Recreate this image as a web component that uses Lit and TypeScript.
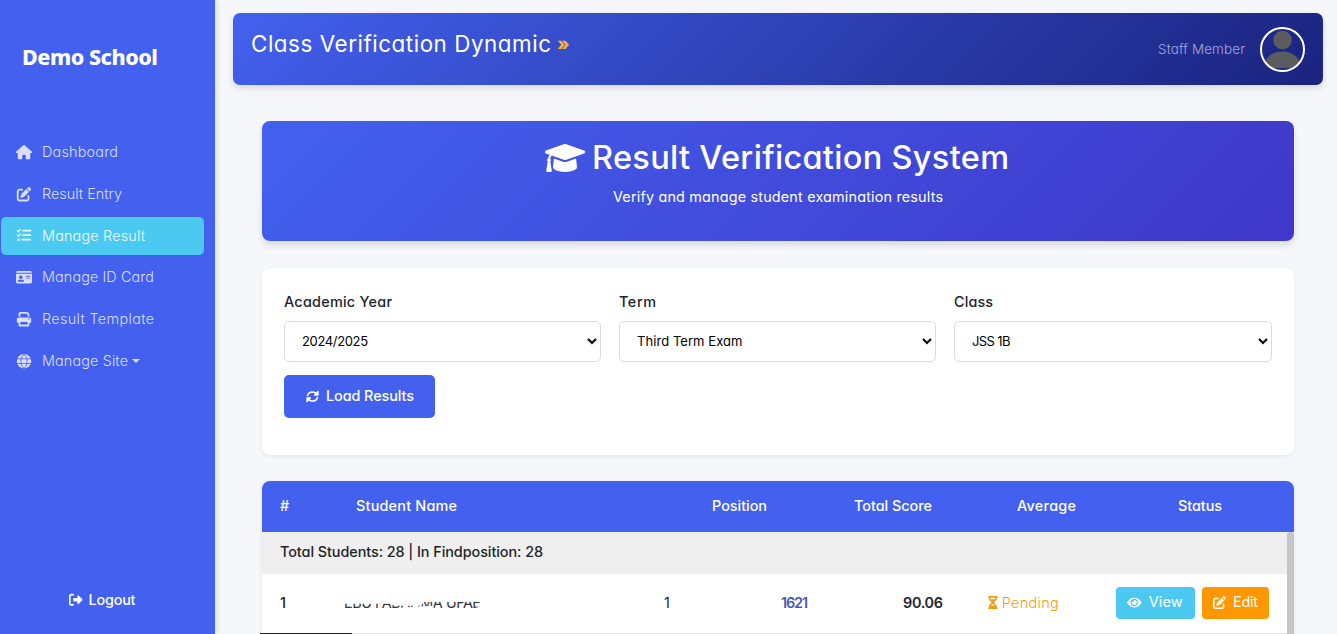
import { LitElement, html, css, svg } from "lit";
import { customElement, property, state } from "lit/decorators.js";
import { styleMap } from "lit/directives/style-map.js";

/** A single line of text tracked so that it spans the given width. */
@customElement("fit-label")
class FitLabel extends LitElement {
  static styles = css`
    :host { display: inline-block; white-space: pre; flex: none; }
    .line { display: inline-block; }
  `;
  @property() text = "";
  @property({ type: Number }) width = 0;
  @state() private tracking = 0;

  firstUpdated() {
    const line = this.renderRoot.querySelector(".line") as HTMLElement;
    const natural = line.getBoundingClientRect().width;
    this.tracking = (this.width - natural) / Math.max(1, this.text.length - 1);
  }

  render() {
    return html`<span class="line" style=${styleMap({
      letterSpacing: `${this.tracking}px`,
      marginRight: `${-this.tracking}px`,
    })}>${this.text}</span>`;
  }
}

const EDIT = svg`<path d="M471.6 21.7c-21.9-21.9-57.3-21.9-79.2 0L362.3 51.7l97.9 97.9 30.1-30.1c21.9-21.9 21.9-57.3 0-79.2L471.6 21.7zm-299.2 220c-6.1 6.1-10.8 13.6-13.5 21.9l-29.6 88.8c-2.9 8.6-.6 18.1 5.8 24.6s15.9 8.7 24.6 5.8l88.8-29.6c8.2-2.7 15.7-7.4 21.9-13.5L437.7 172.3 339.7 74.3 172.4 241.7zM96 64C43 64 0 107 0 160V416c0 53 43 96 96 96H352c53 0 96-43 96-96V320c0-17.7-14.3-32-32-32s-32 14.3-32 32v96c0 17.7-14.3 32-32 32H96c-17.7 0-32-14.3-32-32V160c0-17.7 14.3-32 32-32h96c17.7 0 32-14.3 32-32s-14.3-32-32-32H96z"/>`;

const ICONS: Record<string, { w: number; body: unknown }> = {
  home: { w: 576, body: svg`<path d="M575.8 255.5c0 18-15 32.1-32 32.1h-32l.7 160.2c0 2.7-.2 5.4-.5 8.1V472c0 22.1-17.9 40-40 40H456 392c-22.1 0-40-17.9-40-40V384c0-17.7-14.3-32-32-32H256c-17.7 0-32 14.3-32 32v88c0 22.1-17.9 40-40 40H104c-22.1 0-40-17.9-40-40V360 287.6H32c-18 0-32-14-32-32.1c0-9 3-17 10-24L266.4 8c7-7 15-8 22-8s15 2 21 7L564.8 231.5c8 7 12 15 11 24z"/>` },
  edit: { w: 512, body: EDIT },
  tasks: { w: 512, body: svg`<path fill="none" stroke="currentColor" stroke-width="46" stroke-linecap="round" stroke-linejoin="round" d="M24 96l38 36 66-80M24 256l38 36 66-80"/><circle cx="64" cy="416" r="42"/><path fill="none" stroke="currentColor" stroke-width="62" stroke-linecap="round" d="M224 96h256M224 256h256M192 416h288"/>` },
  card: { w: 576, body: svg`<path fill-rule="evenodd" d="M0 96c0-35 29-64 64-64h448c35 0 64 29 64 64zM0 128h576v288c0 35-29 64-64 64H64c-35 0-64-29-64-64zM64 405c0 6 5 11 11 11h202c6 0 11-5 11-11 0-29-24-53-53-53H117c-29 0-53 24-53 53zM176 192a64 64 0 1 0 .1 0zM352 208v32h160v-32zM352 272v32h160v-32z"/>` },
  print: { w: 512, body: svg`<path fill-rule="evenodd" d="M128 0C93 0 64 29 64 64v96h64V64h227l29 29v67h64V93c0-17-7-33-19-45L400 19C388 7 372 0 355 0zM64 192c-35 0-64 29-64 64v112c0 9 7 16 16 16h48v96c0 18 14 32 32 32h320c18 0 32-14 32-32v-96h48c9 0 16-7 16-16V256c0-35-29-64-64-64zM128 352h256v96H128zM432 224a24 24 0 1 0 .1 0z"/>` },
  globe: { w: 512, body: svg`<circle cx="256" cy="256" r="256"/><path fill="none" stroke="#4361ee" stroke-width="30" d="M8 172h496M8 340h496M256 0c-150 150-150 362 0 512M256 0c150 150 150 362 0 512"/>` },
  logout: { w: 512, body: svg`<path fill="none" stroke="currentColor" stroke-width="62" stroke-linecap="round" d="M160 64H96c-35 0-64 29-64 64v256c0 35 29 64 64 64h64"/><path d="M505 273 361 419c-15 15-41 5-41-17v-82H192c-18 0-32-14-32-32v-64c0-18 14-32 32-32h128v-82c0-22 26-32 41-17l144 146c9 10 9 25 0 34z"/>` },
  sync: { w: 512, body: svg`<path fill="none" stroke="currentColor" stroke-width="62" stroke-linecap="round" d="M62 218C88 130 165 76 256 76c67 0 119 28 160 76M450 294c-26 88-103 142-194 142-67 0-119-28-160-76"/><path d="M480 32c12 0 20 8 20 22v150c0 10-8 18-18 18H334c-22 0-30-20-16-34L454 44c7-7 16-12 26-12zM32 480c-12 0-20-8-20-22V308c0-10 8-18 18-18h148c22 0 30 20 16 34L58 468c-7 7-16 12-26 12z"/>` },
  grad: { w: 640, body: svg`<path d="M623.1 136.9l-282.7-101.2c-13.73-4.91-28.7-4.91-42.4 0L16.05 136.9C6.438 140.4 0 149.6 0 160s6.438 19.65 16.05 23.09L76.07 204.6c-11.89 15.8-20.26 34.16-24.55 53.95C40.05 263.4 32 274.8 32 288c0 9.953 4.814 18.49 11.94 24.36l-24.83 149C17.48 471.1 25 480 34.89 480H93.11c9.887 0 17.41-8.879 15.78-18.63l-24.83-149C91.19 306.5 96 297.1 96 288c0-10.29-5.174-19.03-12.72-24.89c4.252-17.76 12.88-33.82 24.94-47.03l190.6 68.23c13.73 4.91 28.7 4.91 42.43 0l282.7-101.2C632.7 179.7 640 170.4 640 160S632.7 140.4 623.1 136.9zM351.1 314.4C341.7 318.1 330.9 320 320 320c-10.92 0-21.69-1.867-32-5.555L142.8 262.5L128 405.3C128 446.6 213.1 480 320 480c105.1 0 192-33.4 192-74.67l-14.78-142.9L351.1 314.4z"/>` },
  eye: { w: 576, body: svg`<path fill-rule="evenodd" d="M572.52 241.4C518.29 135.59 410.93 64 288 64S57.68 135.64 3.48 241.41a32.35 32.35 0 0 0 0 29.19C57.71 376.41 165.07 448 288 448s230.32-71.64 284.52-177.41a32.35 32.35 0 0 0 0-29.19zM288 400a144 144 0 1 1 144-144 143.93 143.93 0 0 1-144 144zm0-240a95.31 95.31 0 0 0-25.31 3.79 47.85 47.85 0 0 1-66.9 66.9A95.78 95.78 0 1 0 288 160z"/>` },
  hourglass: { w: 384, body: svg`<path fill-rule="evenodd" d="M32 0C14 0 0 14 0 32s14 32 32 32v11c0 42 17 83 47 113l68 68-68 68c-30 30-47 71-47 113v11c-18 0-32 14-32 32s14 32 32 32h320c18 0 32-14 32-32s-14-32-32-32v-11c0-42-17-83-47-113l-68-68 68-68c30-30 47-71 47-113V64c18 0 32-14 32-32S370 0 352 0zM96 75V64h192v11c0 19-6 38-16 53H112c-10-15-16-34-16-53zM112 384c3-5 7-10 12-15l68-67 68 67c5 5 9 10 12 15z"/>` },
};

const icon = (name: string, cls = "") => html`<svg class="icon ${cls}" viewBox="0 0 ${ICONS[name].w} 512" fill="currentColor">${ICONS[name].body}</svg>`;
const label = (text: string, width: number, cls = "") => html`<fit-label class=${cls} .text=${text} .width=${width}></fit-label>`;

const NAV: [string, string, number][] = [
  ["home", "Dashboard", 76],
  ["edit", "Result Entry", 80],
  ["tasks", "Manage Result", 103],
  ["card", "Manage ID Card", 112],
  ["print", "Result Template", 112],
  ["globe", "Manage Site", 86],
];
const FILTERS: [string, number, string, string][] = [
  ["Academic Year", 108, "2024/2025", "-0.35px"],
  ["Term", 37, "Third Term Exam", "0.06px"],
  ["Class", 39, "JSS 1B", "-0.6px"],
];
const COLUMNS: [string, number][] = [
  ["#", 12], ["Student Name", 101], ["Position", 55], ["Total Score", 78], ["Average", 59], ["Status", 44],
];

@customElement("app-root")
class AppRoot extends LitElement {
  static styles = css`
    :host {
      display: flex; width: 100%; height: 634px; overflow: hidden; background: #f5f7fb; color: #212529;
      font-family: Inter, "Open Sans", sans-serif; font-size: 14.4px; line-height: 20px;
      font-feature-settings: "cv11";
    }
    * { box-sizing: border-box; }
    .icon { display: block; flex: none; height: 14.4px; overflow: visible; }
    .sidebar { width: 215px; flex: none; display: flex; flex-direction: column; background: #4361ee; color: #fff; box-shadow: 2px 0 6px rgba(0,0,0,.1); }
    .brand { padding: 43px 0 0 22px; height: 133px; font: 800 21.500px/28px "Noto Sans", sans-serif; font-stretch: 87%; }
    .nav { display: flex; flex-direction: column; gap: 3.8px; padding-left: 1px; }
    .nav-item { display: flex; align-items: center; width: 203px; height: 38px; padding-left: 15px; border-radius: 5px; font-weight: 300; color: #d9dffc; }
    .nav-item.active { background: #4cc9f0; color: #f0fbff; }
    .nav-icon { width: 26px; display: flex; }
    .nav-icon .icon { width: 16px; }
    .caret { border: 4px solid transparent; border-top-color: currentColor; border-bottom: 0; margin-left: 4px; }
    .logout { display: flex; align-items: center; gap: 6px; margin: auto 0 24px 69px; font-weight: 500; }
    .logout .icon { height: 13.500px; }
    .main { flex: 1; padding: 13px 14px 0 18px; display: flex; flex-direction: column; }
    .topbar { display: flex; height: 72px; flex: none; padding: 0 18px; border-radius: 7px; background: linear-gradient(135deg, #4361ee, #1a237e); color: #fff; box-shadow: 0 3px 7px rgba(0,0,0,.13); }
    .page-title { font-size: 22.4px; line-height: 30px; padding-top: 16px; }
    .chevrons { color: #fbb034; font-size: 18px; font-weight: 800; line-height: 30px; padding: 16px 0 0 6px; }
    .staff { margin-left: auto; padding-top: 26px; font-size: 13.500px; font-weight: 300; color: #a3aadd; }
    .avatar { width: 45px; height: 45px; margin: 14px 0 0 15px; flex: none; }
    .content { padding: 36px 29px 0; display: flex; flex-direction: column; }
    .hero { height: 120px; flex: none; padding-top: 17px; border-radius: 8px; background: linear-gradient(135deg, #4361ee, #3f37c9); color: #fff; box-shadow: 0 4px 7px rgba(0,0,0,.12); display: flex; flex-direction: column; align-items: center; }
    .hero-title { display: flex; align-items: center; gap: 7px; height: 40px; margin-right: 2px; font-size: 32.500px; line-height: 40px; font-weight: 500; }
    .hero-title .icon { height: 32px; }
    .hero-sub { margin-top: 9px; }
    .filters { height: 187px; flex: none; margin-top: 27px; padding: 24px 22px 0; border-radius: 8px; background: #fff; box-shadow: 0 1px 4px rgba(0,0,0,.08); }
    .fields { display: grid; grid-template-columns: 317px 317px 318px; gap: 18px; }
    .field { display: flex; flex-direction: column; gap: 9px; font-weight: 500; }
    .select { width: 100%; height: 41px; padding: 0 14px 1px 13px; border: 1px solid #d9dcdf; border-radius: 5px; background: #fff; color: #000; font: 400 13px Inter, sans-serif; font-feature-settings: inherit; }
    .load { display: flex; align-items: center; gap: 7px; width: 151px; height: 43px; margin-top: 13px; padding: 0 0 1px 22px; border: 0; border-radius: 5px; background: #4361ee; color: #fff; font: inherit; font-weight: 500; }
    .load .icon { height: 13px; }
    .table { margin-top: 26px; height: 160px; flex: none; border-radius: 8px 8px 0 0; overflow: hidden; background: #fff; box-shadow: 0 1px 4px rgba(0,0,0,.08); }
    .head { display: grid; grid-template-columns: 76px 356px 142px 163px 161px auto; height: 51px; padding: 0 0 1px 18px; align-items: center; background: #4361ee; color: #fff; font-weight: 500; }
    .body { display: flex; height: 102px; }
    .rows { flex: 1; }
    .bar { width: 7px; background: #c4c5c6; border-radius: 3px 3px 0 0; }
    .summary { height: 42px; background: #efefef; padding: 10px 0 0 18px; font-weight: 500; }
    .row { display: grid; grid-template-columns: 64px 320px 117px 122px 84px 129px 86px auto; height: 60px; padding: 0 0 2px 18px; align-items: center; border-bottom: 1px solid #dfe3e3; }
    .index { font-weight: 500; }
    .name { color: #333; clip-path: polygon(0 56%, 14% 56%, 16% 66%, 24% 66%, 25% 48%, 46% 46%, 62% 36%, 84% 30%, 84% 42%, 100% 42%, 100% 54%, 80% 54%, 74% 38%, 66% 55%, 44% 66%, 40% 80%, 28% 80%, 28% 66%, 16% 78%, 0 80%); }
    .score { color: #4659b8; font-weight: 600; }
    .avg { font-weight: 600; }
    .pending { display: flex; align-items: center; gap: 4px; padding-left: 1px; font-weight: 300; color: #f39c12; }
    .pending .icon { height: 13px; }
    .btn { display: flex; align-items: center; gap: 7px; height: 32px; padding: 0 0 1px 11px; border: 0; border-radius: 4px; color: #fff; font: inherit; background: #4cc9f0; }
    .view { width: 79px; }
    .edit { width: 67px; background: #ff9800; }
    .btn .icon { height: 13px; }
    .status-line { position: absolute; left: 260px; top: 632.5px; width: 92px; height: 2px; background: #202124; }
  `;

  render() {
    return html`
      <aside class="sidebar">
        <div class="brand">${label("Demo School", 136)}</div>
        <nav class="nav">
          ${NAV.map(([glyph, text, width]) => html`
            <a class="nav-item ${glyph === "tasks" ? "active" : ""}">
              <span class="nav-icon">${icon(glyph)}</span>${label(text, width)}
              ${glyph === "globe" ? html`<span class="caret"></span>` : ""}
            </a>`)}
        </nav>
        <a class="logout">${icon("logout")}${label("Logout", 47)}</a>
      </aside>
      <main class="main">
        <header class="topbar">
          <div class="page-title">${label("Class Verification Dynamic", 300)}</div>
          <div class="chevrons">${label("»", 12)}</div>
          <div class="staff">${label("Staff Member", 87)}</div>
          <svg class="avatar" viewBox="0 0 45 45">
            <clipPath id="disc"><circle cx="22.5" cy="22.5" r="21"/></clipPath>
            <g clip-path="url(#disc)" fill="#5a5c5e"><circle cx="22.5" cy="13" r="9.300"/><path d="M5 41v-3c0-7 7-13.500 17.500-13.500S40 31 40 38v3z"/></g>
            <circle cx="22.5" cy="22.5" r="21.500" fill="none" stroke="#fff" stroke-width="2"/>
          </svg>
        </header>
        <div class="content">
          <section class="hero">
            <div class="hero-title">${icon("grad")}${label("Result Verification System", 417)}</div>
            <div class="hero-sub">${label("Verify and manage student examination results", 330)}</div>
          </section>
          <section class="filters">
            <div class="fields">
              ${FILTERS.map(([text, width, value, tracking]) => html`
                <label class="field">${label(text, width)}
                  <select class="select" style=${styleMap({ letterSpacing: tracking })}><option>${value}</option></select>
                </label>`)}
            </div>
            <button class="load">${icon("sync")}${label("Load Results", 88)}</button>
          </section>
          <section class="table">
            <div class="head">${COLUMNS.map(([text, width]) => label(text, width))}</div>
            <div class="body">
              <div class="rows">
                <div class="summary">${label("Total Students: 28 | In Findposition: 28", 263)}</div>
                <div class="row">
                  <span class="index">1</span>
                  ${label("EBU FADAHMA UFAE", 137, "name")}
                  <span>1</span>
                  ${label("1621", 27, "score")}
                  ${label("90.06", 40, "avg")}
                  <span class="pending">${icon("hourglass")}${label("Pending", 57)}</span>
                  <button class="btn view">${icon("eye")}${label("View", 34)}</button>
                  <button class="btn edit">${icon("edit")}${label("Edit", 25)}</button>
                </div>
              </div>
              <div class="bar"></div>
            </div>
          </section>
        </div>
      </main>
      <div class="status-line"></div>
    `;
  }
}
